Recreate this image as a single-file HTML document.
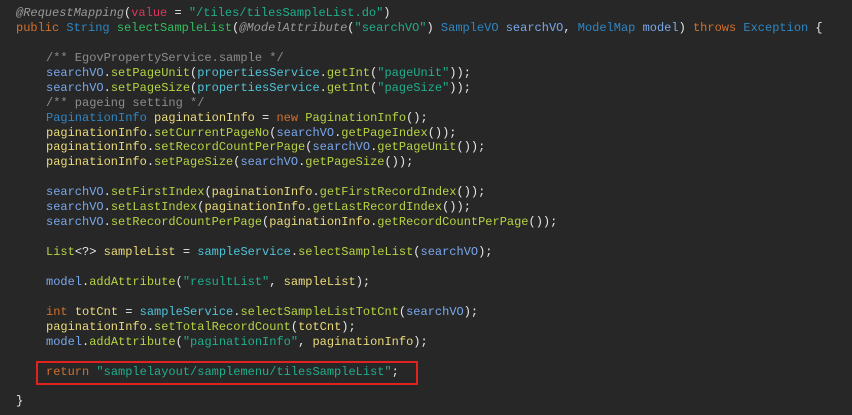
<!DOCTYPE html>
<html><head><meta charset="utf-8"><style>
html,body{margin:0;padding:0;background:#272727;width:852px;height:415px;overflow:hidden}
.code{position:absolute;left:16px;top:6px;font-family:"Liberation Mono",monospace;font-size:12px;color:#e8e8e8}
.code div{height:14.95px;line-height:14.95px;white-space:pre}
.an{color:#9a9a9a;font-style:italic}.at{color:#d8385c}.s{color:#1fae8c}.k{color:#d2702c}.t{color:#2f86c2}
.m{color:#2fbf5e}.v{color:#79a7ec}.f{color:#b5d444}.p{color:#4fc3d9}.y{color:#ebdb7a}.c{color:#8c8c8c}
.i{display:inline-block;width:30px}
.box{position:absolute;left:36px;top:361px;width:382px;height:24px;border:2px solid #e0231f;box-sizing:border-box}
</style></head><body>
<div class="code">
<div><span class="an">@RequestMapping</span>(<span class="at">value</span> = <span class="s">"/tiles/tilesSampleList.do"</span>)</div>
<div><span class="k">public</span> <span class="t">String</span> <span class="m">selectSampleList</span>(<span class="an">@ModelAttribute</span>(<span class="s">"searchVO"</span>) <span class="t">SampleVO</span> <span class="v">searchVO</span>, <span class="t">ModelMap</span> <span class="v">model</span>) <span class="k">throws</span> <span class="t">Exception</span> {</div>
<div></div>
<div><span class="i"></span><span class="c">/** EgovPropertyService.sample */</span></div>
<div><span class="i"></span><span class="v">searchVO</span>.<span class="f">setPageUnit</span>(<span class="p">propertiesService</span>.<span class="f">getInt</span>(<span class="s">"pageUnit"</span>));</div>
<div><span class="i"></span><span class="v">searchVO</span>.<span class="f">setPageSize</span>(<span class="p">propertiesService</span>.<span class="f">getInt</span>(<span class="s">"pageSize"</span>));</div>
<div><span class="i"></span><span class="c">/** pageing setting */</span></div>
<div><span class="i"></span><span class="t">PaginationInfo</span> <span class="y">paginationInfo</span> = <span class="k">new</span> <span class="f">PaginationInfo</span>();</div>
<div><span class="i"></span><span class="y">paginationInfo</span>.<span class="f">setCurrentPageNo</span>(<span class="v">searchVO</span>.<span class="f">getPageIndex</span>());</div>
<div><span class="i"></span><span class="y">paginationInfo</span>.<span class="f">setRecordCountPerPage</span>(<span class="v">searchVO</span>.<span class="f">getPageUnit</span>());</div>
<div><span class="i"></span><span class="y">paginationInfo</span>.<span class="f">setPageSize</span>(<span class="v">searchVO</span>.<span class="f">getPageSize</span>());</div>
<div></div>
<div><span class="i"></span><span class="v">searchVO</span>.<span class="f">setFirstIndex</span>(<span class="y">paginationInfo</span>.<span class="f">getFirstRecordIndex</span>());</div>
<div><span class="i"></span><span class="v">searchVO</span>.<span class="f">setLastIndex</span>(<span class="y">paginationInfo</span>.<span class="f">getLastRecordIndex</span>());</div>
<div><span class="i"></span><span class="v">searchVO</span>.<span class="f">setRecordCountPerPage</span>(<span class="y">paginationInfo</span>.<span class="f">getRecordCountPerPage</span>());</div>
<div></div>
<div><span class="i"></span><span class="f">List</span>&lt;?&gt; <span class="y">sampleList</span> = <span class="p">sampleService</span>.<span class="f">selectSampleList</span>(<span class="v">searchVO</span>);</div>
<div></div>
<div><span class="i"></span><span class="v">model</span>.<span class="f">addAttribute</span>(<span class="s">"resultList"</span>, <span class="y">sampleList</span>);</div>
<div></div>
<div><span class="i"></span><span class="k">int</span> <span class="y">totCnt</span> = <span class="p">sampleService</span>.<span class="f">selectSampleListTotCnt</span>(<span class="v">searchVO</span>);</div>
<div><span class="i"></span><span class="y">paginationInfo</span>.<span class="f">setTotalRecordCount</span>(<span class="y">totCnt</span>);</div>
<div><span class="i"></span><span class="v">model</span>.<span class="f">addAttribute</span>(<span class="s">"paginationInfo"</span>, <span class="y">paginationInfo</span>);</div>
<div></div>
<div><span class="i"></span><span class="k">return</span> <span class="s">"samplelayout/samplemenu/tilesSampleList"</span>;</div>
<div></div>
<div>}</div>
</div>
<div class="box"></div>
</body></html>
